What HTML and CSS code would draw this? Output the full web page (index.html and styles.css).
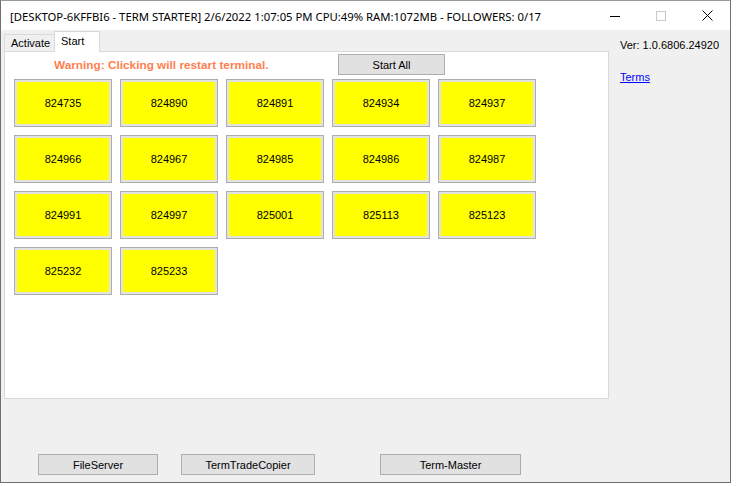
FILE: index.html
```html
<!DOCTYPE html>
<html>
<head>
<meta charset="utf-8">
<link rel="stylesheet" href="styles.css">
</head>
<body>
<div class="window">
  <div class="titlebar">
    <div class="title">[DESKTOP-6KFFBI6 - TERM STARTER] 2/6/2022 1:07:05 PM CPU:49% RAM:1072MB - FOLLOWERS: 0/17</div>
    <div class="controls">
      <div class="ctl"><svg width="10" height="10" viewBox="0 0 10 10"><path d="M0 5.5H10" stroke="#000" stroke-width="1"/></svg></div>
      <div class="ctl"><svg width="10" height="10" viewBox="0 0 10 10"><rect x="0.5" y="0.5" width="9" height="9" fill="none" stroke="#c8c8c8" stroke-width="1"/></svg></div>
      <div class="ctl"><svg width="11" height="11" viewBox="0 0 11 11"><path d="M0.5 0.5L10.5 10.5M10.5 0.5L0.5 10.5" stroke="#000" stroke-width="1"/></svg></div>
    </div>
  </div>
  <div class="client">
    <div class="main">
      <div class="tabctl">
        <div class="tabstrip">
          <div class="tab">Activate</div>
          <div class="tab active">Start</div>
        </div>
        <div class="page">
          <div class="pagehead">
            <span class="warning">Warning: Clicking will restart terminal.</span>
            <button class="btn startall">Start All</button>
          </div>
          <div class="grid">
            <div class="ybtn">824735</div>
            <div class="ybtn">824890</div>
            <div class="ybtn">824891</div>
            <div class="ybtn">824934</div>
            <div class="ybtn">824937</div>
            <div class="ybtn">824966</div>
            <div class="ybtn">824967</div>
            <div class="ybtn">824985</div>
            <div class="ybtn">824986</div>
            <div class="ybtn">824987</div>
            <div class="ybtn">824991</div>
            <div class="ybtn">824997</div>
            <div class="ybtn">825001</div>
            <div class="ybtn">825113</div>
            <div class="ybtn">825123</div>
            <div class="ybtn">825232</div>
            <div class="ybtn">825233</div>
          </div>
        </div>
      </div>
      <div class="side">
        <div class="ver">Ver: 1.0.6806.24920</div>
        <a class="terms" href="#">Terms</a>
      </div>
    </div>
    <div class="bottombar">
      <button class="btn b-file">FileServer</button>
      <button class="btn b-copier">TermTradeCopier</button>
      <button class="btn b-master">Term-Master</button>
    </div>
  </div>
</div>
</body>
</html>
```

FILE: styles.css
```css
* { box-sizing: border-box; }
html, body { margin: 0; padding: 0; background: #ffffff; }
body { width: 736px; height: 486px; overflow: hidden; font-family: "Liberation Sans", Arial, sans-serif; font-size: 11px; color: #000; }

.window {
  width: 731px;
  height: 483px;
  border: 1px solid #6f6f6f;
  border-top-color: #9a9a9a;
  display: flex;
  flex-direction: column;
  background: #f0f0f0;
}

.titlebar {
  height: 29px;
  background: #ffffff;
  display: flex;
  align-items: center;
  flex: none;
}
.title {
  flex: 1;
  padding-left: 9px;
  font-family: "Noto Sans", "Open Sans", sans-serif;
  font-size: 11.3px;
  white-space: nowrap;
  color: #000;
  padding-top: 1px;
}
.controls { display: flex; height: 29px; }
.ctl { width: 46px; height: 29px; display: flex; align-items: center; justify-content: center; }

.client { flex: 1; display: flex; flex-direction: column; }
.main { display: flex; padding-top: 1px; }

.tabctl { margin-left: 3px; width: 605px; display: flex; flex-direction: column; }
.tabstrip { display: flex; align-items: flex-end; height: 20px; }
.tab {
  height: 17px;
  padding: 0 6px 0 6px;
  border: 1px solid #d9d9d9;
  border-bottom: none;
  background: #f0f0f0;
  display: flex;
  align-items: center;
  font-size: 11px;
  width: 51px;
}
.tab.active {
  height: 21px;
  background: #ffffff;
  width: 46px;
  margin-left: -1px;
  margin-bottom: -1px;
  position: relative;
  z-index: 1;
  padding-bottom: 3px;
}

.page {
  height: 348px;
  background: #ffffff;
  border: 1px solid #d9d9d9;
  padding: 2px 0 0 9px;
}
.pagehead { display: flex; align-items: center; height: 21px; }
.warning {
  margin-left: 40px;
  width: 284px;
  color: #ff7f50;
  font-weight: bold;
  font-size: 11.8px;
  white-space: nowrap;
}
.btn {
  font-family: "Liberation Sans", Arial, sans-serif;
  font-size: 11px;
  color: #000;
  background: #e1e1e1;
  border: 1px solid #adadad;
  height: 21px;
  padding: 0;
  margin: 0;
}
.startall { width: 107px; }

.grid {
  margin-top: 4px;
  display: grid;
  grid-template-columns: repeat(5, 98px);
  grid-auto-rows: 48px;
  gap: 8px;
}
.ybtn {
  background: #ffff00;
  border: 1px solid #adadad;
  box-shadow: inset 0 0 0 2px #e3e3e3;
  display: flex;
  align-items: center;
  justify-content: center;
  font-size: 11px;
}

.side { margin-left: 11px; padding-top: 8px; display: flex; flex-direction: column; }
.ver { font-size: 11px; line-height: 13px; }
.terms { margin-top: 19px; color: #0000ff; text-decoration: underline; font-size: 11px; line-height: 13px; }

.bottombar {
  margin-top: auto;
  display: flex;
  padding: 0 0 7px 37px;
}
.b-file { width: 120px; }
.b-copier { width: 134px; margin-left: 23px; }
.b-master { width: 141px; margin-left: 65px; }
```
